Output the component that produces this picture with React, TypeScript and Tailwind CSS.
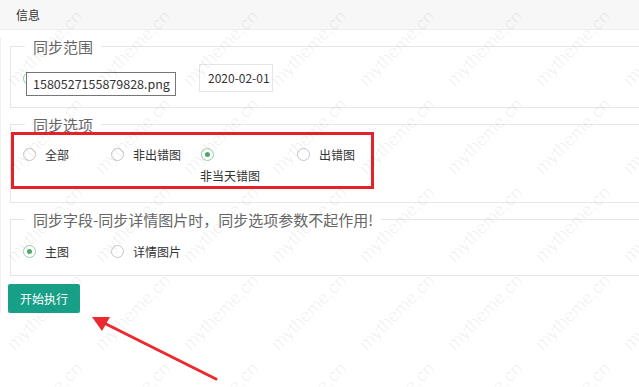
import React from 'react';

const font = 'font-["Noto_Sans_CJK_SC","Noto_Sans",sans-serif]';

const Radio = ({ checked = false }: { checked?: boolean }) => (
  <span
    className={`w-[13px] h-[13px] shrink-0 rounded-full border bg-white flex items-center justify-center ${
      checked ? 'border-[#93cfa6]' : 'border-[#c6c6c6]'
    }`}
  >
    {checked && <span className="w-[5px] h-[5px] rounded-full bg-[#4dad6b]" />}
  </span>
);

const RadioItem = ({ label, checked, className = '' }: { label: string; checked?: boolean; className?: string }) => (
  <div className={`flex items-center gap-[9px] h-[21px] ${className}`}>
    <Radio checked={checked} />
    <span className="text-[12px] text-[#333]">{label}</span>
  </div>
);

const Watermarks = () => (
  <div className="absolute left-[1px] top-[4px] grid grid-cols-[repeat(8,88px)] auto-rows-[88px] pointer-events-none">
    {Array.from({ length: 40 }).map((_, i) => (
      <div key={i} className="flex items-center justify-center">
        <span className="-rotate-45 whitespace-nowrap text-[18px] text-black/[0.06] font-['Liberation_Sans',sans-serif]">
          mytheme.cn
        </span>
      </div>
    ))}
  </div>
);

export default function App() {
  return (
    <div className={`relative w-[639px] h-[387px] overflow-hidden bg-white ${font}`}>
      <div className="h-[30px] bg-[#f7f7f7] border-b border-[#ececec] pl-4 text-[12px] leading-[29px] text-[#333]">
        信息
      </div>

      <div className="border-l border-[#f0f0f0] pl-[7px]">
        {/* 同步范围 */}
        <fieldset className="relative mt-2 ml-[2px] w-[700px] border border-[#e6e6e6] pl-3 pt-[9px] pb-[15px]">
          <legend className="ml-[2px] px-2 text-[15px] leading-[17px] text-[#666]">同步范围</legend>
          <div className="flex items-center h-[28px]">
            <div className="w-[88px]">
              <Radio checked />
            </div>
            <div className="w-[88px]">
              <Radio />
            </div>
            <div className="h-[28px] w-[74px] border border-[#e6e6e6] pl-2 text-[12px] leading-[26px] text-[#333] overflow-hidden whitespace-nowrap">
              2020-02-01
            </div>
          </div>
          <div className="absolute left-[15px] top-[17px] h-[24px] w-[150px] border border-[#767676] bg-white pl-[6px] text-[12.5px] leading-[22px] text-[#333] whitespace-nowrap">
            1580527155879828.png
          </div>
        </fieldset>

        {/* 同步选项 */}
        <fieldset className="relative mt-2 ml-[2px] w-[700px] border border-[#e6e6e6] pl-3 pt-[11px] pb-[16px]">
          <legend className="ml-[2px] px-2 text-[15px] leading-[17px] text-[#666]">同步选项</legend>
          <div className="flex items-start">
            <RadioItem label="全部" className="w-[88px]" />
            <RadioItem label="非出错图" className="w-[88px]" />
            <div className="w-[98px] pl-[2px]">
              <div className="h-[21px] flex items-center">
                <Radio checked />
              </div>
              <div className="h-[21px] -ml-[1px] text-[12px] leading-[21px] text-[#333]">非当天错图</div>
            </div>
            <RadioItem label="出错图" />
          </div>
          <div className="absolute left-0 -top-[1px] w-[363px] h-[57px] border-[3px] border-[#e3222b] pointer-events-none" />
        </fieldset>

        {/* 同步字段 */}
        <fieldset className="mt-2 ml-[2px] w-[700px] border border-[#e6e6e6] pl-3 pt-[13px] pb-[13px]">
          <legend className="ml-[2px] px-2 text-[15px] leading-[17px] text-[#666]">
            同步字段-同步详情图片时，同步选项参数不起作用!
          </legend>
          <div className="flex items-center">
            <RadioItem label="主图" checked className="w-[88px]" />
            <RadioItem label="详情图片" />
          </div>
        </fieldset>

        <button className="mt-2 h-[29px] w-[72px] rounded-[2px] bg-[#189f88] text-[12px] text-white">开始执行</button>
      </div>

      <Watermarks />

      <svg className="absolute left-0 top-0 pointer-events-none" width="639" height="387">
        <line x1="216" y1="379" x2="104" y2="323" stroke="#ea2a2e" strokeWidth="3" strokeLinecap="round" />
        <polygon points="92,317 110,317 102,331" fill="#ea2a2e" />
      </svg>
    </div>
  );
}
